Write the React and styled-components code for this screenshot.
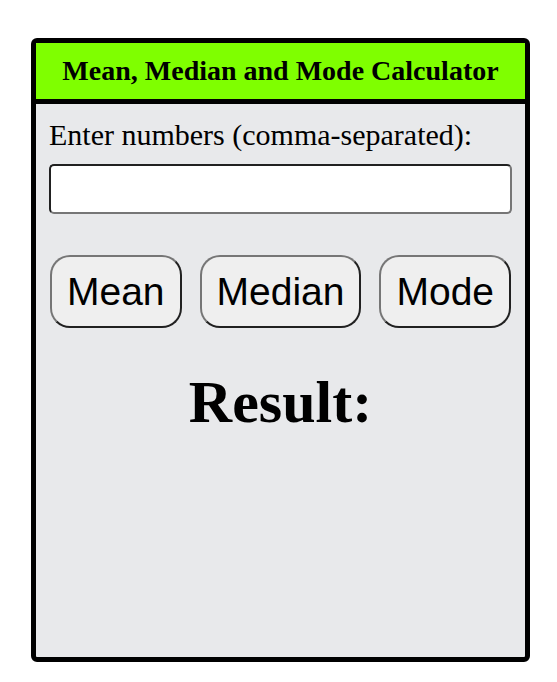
import React, { useState } from "react";
import styled, { createGlobalStyle } from "styled-components";

const GlobalStyle = createGlobalStyle`
  body {
    margin: 0;
    background: #ffffff;
    font-family: "Liberation Serif", "Times New Roman", serif;
  }
`;

const Calculator = styled.div`
  box-sizing: border-box;
  width: 499px;
  height: 624px;
  margin: 38px 0 0 31px;
  border: 5px solid #000;
  border-radius: 6px;
  background: #e8e9eb;
  display: flex;
  flex-direction: column;
  overflow: hidden;
`;

const Header = styled.div`
  height: 56px;
  background: #7fff00;
  border-bottom: 5px solid #000;
  display: flex;
  align-items: center;
  justify-content: center;
`;

const Title = styled.h2`
  margin: 0;
  font-size: 28px;
  font-weight: bold;
  color: #000;
`;

const Body = styled.div`
  padding: 14px 13px 0;
  display: flex;
  flex-direction: column;
`;

const Label = styled.label`
  font-size: 30px;
  color: #000;
  line-height: 34px;
`;

const NumberInput = styled.input`
  box-sizing: border-box;
  width: 100%;
  height: 50px;
  margin-top: 12px;
  border: 2px inset #767676;
  border-radius: 5px;
  background: #fff;
  font-size: 22px;
  padding: 0 8px;
`;

const ButtonRow = styled.div`
  display: flex;
  justify-content: center;
  gap: 18px;
  margin-top: 41px;
`;

const ActionButton = styled.button`
  box-sizing: border-box;
  height: 73px;
  padding: 0 15px;
  font-family: "Liberation Sans", Arial, sans-serif;
  font-size: 39px;
  color: #000;
  background: #efefef;
  border: 2px outset #767676;
  border-radius: 20px;
  cursor: pointer;
`;

const Result = styled.h1`
  margin: 40px 0 0;
  text-align: center;
  font-size: 60px;
  font-weight: bold;
  color: #000;
`;

export default function App() {
  const [value, setValue] = useState("");
  const [result, setResult] = useState("");

  const numbers = () =>
    value
      .split(",")
      .map((n) => parseFloat(n.trim()))
      .filter((n) => !isNaN(n));

  const mean = () => {
    const nums = numbers();
    if (!nums.length) return setResult("");
    setResult(String(nums.reduce((a, b) => a + b, 0) / nums.length));
  };

  const median = () => {
    const nums = numbers().sort((a, b) => a - b);
    if (!nums.length) return setResult("");
    const mid = Math.floor(nums.length / 2);
    setResult(String(nums.length % 2 ? nums[mid] : (nums[mid - 1] + nums[mid]) / 2));
  };

  const mode = () => {
    const counts = {};
    numbers().forEach((n) => (counts[n] = (counts[n] || 0) + 1));
    const max = Math.max(0, ...Object.values(counts));
    setResult(Object.keys(counts).filter((k) => counts[k] === max).join(", "));
  };

  return (
    <>
      <GlobalStyle />
      <Calculator>
        <Header>
          <Title>Mean, Median and Mode Calculator</Title>
        </Header>
        <Body>
          <Label htmlFor="numbers">Enter numbers (comma-separated):</Label>
          <NumberInput id="numbers" value={value} onChange={(e) => setValue(e.target.value)} />
          <ButtonRow>
            <ActionButton onClick={mean}>Mean</ActionButton>
            <ActionButton onClick={median}>Median</ActionButton>
            <ActionButton onClick={mode}>Mode</ActionButton>
          </ButtonRow>
          <Result>Result: {result}</Result>
        </Body>
      </Calculator>
    </>
  );
}
